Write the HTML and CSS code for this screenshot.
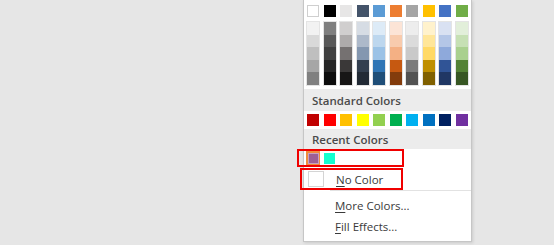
FILE: index.html
```html
<!DOCTYPE html>
<html>
<head>
<meta charset="utf-8">
<link rel="stylesheet" href="styles.css">
</head>
<body>
<div class="panel">
  <div class="theme">
    <div class="grid top-row">
      <span class="sw white" style="background:#ffffff"></span>
      <span class="sw" style="background:#000000"></span>
      <span class="sw" style="background:#e7e6e6"></span>
      <span class="sw" style="background:#44546a"></span>
      <span class="sw" style="background:#5b9bd5"></span>
      <span class="sw" style="background:#ed7d31"></span>
      <span class="sw" style="background:#a5a5a5"></span>
      <span class="sw" style="background:#ffc000"></span>
      <span class="sw" style="background:#4472c4"></span>
      <span class="sw" style="background:#70ad47"></span>
    </div>
    <div class="grid shades">
      <div class="col"><i style="background:#f2f2f2"></i><i style="background:#d9d9d9"></i><i style="background:#bfbfbf"></i><i style="background:#a6a6a6"></i><i style="background:#808080"></i></div>
      <div class="col"><i style="background:#7f7f7f"></i><i style="background:#595959"></i><i style="background:#404040"></i><i style="background:#262626"></i><i style="background:#0d0d0d"></i></div>
      <div class="col"><i style="background:#d0cece"></i><i style="background:#aeabab"></i><i style="background:#757171"></i><i style="background:#3a3838"></i><i style="background:#171616"></i></div>
      <div class="col"><i style="background:#d6dce4"></i><i style="background:#adb9ca"></i><i style="background:#8497b0"></i><i style="background:#333f4f"></i><i style="background:#222a35"></i></div>
      <div class="col"><i style="background:#ddebf7"></i><i style="background:#bdd7ee"></i><i style="background:#9bc2e6"></i><i style="background:#2f75b5"></i><i style="background:#1f4e78"></i></div>
      <div class="col"><i style="background:#fce4d6"></i><i style="background:#f8cbad"></i><i style="background:#f4b084"></i><i style="background:#c65911"></i><i style="background:#833c0c"></i></div>
      <div class="col"><i style="background:#ededed"></i><i style="background:#dbdbdb"></i><i style="background:#c9c9c9"></i><i style="background:#7b7b7b"></i><i style="background:#525252"></i></div>
      <div class="col"><i style="background:#fff2cc"></i><i style="background:#ffe699"></i><i style="background:#ffd966"></i><i style="background:#bf8f00"></i><i style="background:#806000"></i></div>
      <div class="col"><i style="background:#d9e1f2"></i><i style="background:#b4c6e7"></i><i style="background:#8ea9db"></i><i style="background:#305496"></i><i style="background:#203764"></i></div>
      <div class="col"><i style="background:#e2efda"></i><i style="background:#c6e0b4"></i><i style="background:#a9d08e"></i><i style="background:#548235"></i><i style="background:#375623"></i></div>
    </div>
  </div>
  <div class="band band-std">Standard Colors</div>
  <div class="std">
    <div class="grid">
      <span class="sw" style="background:#c00000"></span>
      <span class="sw" style="background:#ff0000"></span>
      <span class="sw" style="background:#ffc000"></span>
      <span class="sw" style="background:#ffff00"></span>
      <span class="sw" style="background:#92d050"></span>
      <span class="sw" style="background:#00b050"></span>
      <span class="sw" style="background:#00b0f0"></span>
      <span class="sw" style="background:#0070c0"></span>
      <span class="sw" style="background:#002060"></span>
      <span class="sw" style="background:#7030a0"></span>
    </div>
  </div>
  <div class="band band-rec">Recent Colors</div>
  <div class="recent">
    <span class="sel"><span class="inner"></span></span>
    <span class="cyan"></span>
    <span class="mark mark-recent"></span>
  </div>
  <div class="item nocolor">
    <span class="box"></span>
    <span class="label"><u>N</u>o Color</span>
    <span class="mark mark-none"></span>
  </div>
  <div class="sep"></div>
  <div class="item plain"><span class="label"><u>M</u>ore Colors...</span></div>
  <div class="item plain"><span class="label"><u>F</u>ill Effects...</span></div>
</div>
</body>
</html>
```

FILE: styles.css
```css
html, body {
  margin: 0;
  padding: 0;
}
body {
  background: #e6e6e6;
  width: 554px;
  height: 245px;
  overflow: hidden;
  font-family: "Open Sans", "Noto Sans", sans-serif;
}
.panel {
  margin-left: 303px;
  width: 169px;
  height: 242px;
  box-sizing: border-box;
  background: #ffffff;
  border-left: 1px solid #c6c6c6;
  border-right: 1px solid #c6c6c6;
  border-bottom: 1px solid #c6c6c6;
  box-shadow: 1px 1px 3px rgba(0,0,0,0.12);
  position: relative;
}
.theme {
  padding: 5px 0 0 3px;
  height: 85px;
  box-sizing: border-box;
}
.grid {
  display: grid;
  grid-template-columns: repeat(10, 12px);
  column-gap: 4.55px;
}
.sw {
  display: block;
  width: 12px;
  height: 12px;
  box-sizing: border-box;
}
.sw.white {
  border: 1px solid #cfcfcf;
}
.shades {
  margin-top: 5px;
}
.col {
  display: flex;
  flex-direction: column;
  height: 63px;
  box-shadow: 0 0 0 1px #e4e4e4;
}
.col i {
  display: block;
  flex: 1;
}
.band {
  background: #ececec;
  color: #4a4a4a;
  font-weight: 600;
  font-size: 11.5px;
  padding-left: 8px;
  display: flex;
  align-items: center;
}
.band-std {
  margin-top: 4px;
  height: 22px;
}
.band-rec {
  height: 20px;
}
.std {
  padding: 3px 0 3px 3px;
}
.std .grid {
  height: 12px;
}
.recent {
  position: relative;
  height: 18px;
  display: flex;
  align-items: center;
  padding-left: 2px;
  gap: 4px;
}
.sel {
  width: 14px;
  height: 14px;
  box-sizing: border-box;
  border: 2px solid #ef8c3c;
  display: flex;
  align-items: center;
  justify-content: center;
}
.sel .inner {
  width: 9px;
  height: 9px;
  background: #9c5f95;
  outline: 1px solid #c8a0c0;
}
.cyan {
  width: 11px;
  height: 11px;
  background: #14ffd0;
}
.mark {
  position: absolute;
  border: 2px solid #f00000;
  box-sizing: border-box;
}
.mark-recent {
  left: -7px;
  top: 0;
  width: 107px;
  height: 18px;
}
.mark-none {
  left: -4px;
  top: 0;
  width: 103px;
  height: 22px;
}
.item {
  position: relative;
  display: flex;
  align-items: center;
  color: #3a3a3a;
  font-size: 11.5px;
}
.nocolor {
  margin-top: 1px;
  height: 22px;
  padding-left: 4px;
}
.nocolor .box {
  width: 16px;
  height: 16px;
  box-sizing: border-box;
  border: 1px solid #d4d4d4;
  background: #fff;
}
.nocolor .label {
  margin-left: 12px;
}
.sep {
  margin-left: 26px;
  height: 1px;
  background: #e2e2e2;
}
.plain {
  height: 21px;
  padding-left: 31px;
}
.sep + .plain {
  margin-top: 4px;
}
u {
  text-decoration-thickness: 1px;
  text-underline-offset: 2px;
}
```
